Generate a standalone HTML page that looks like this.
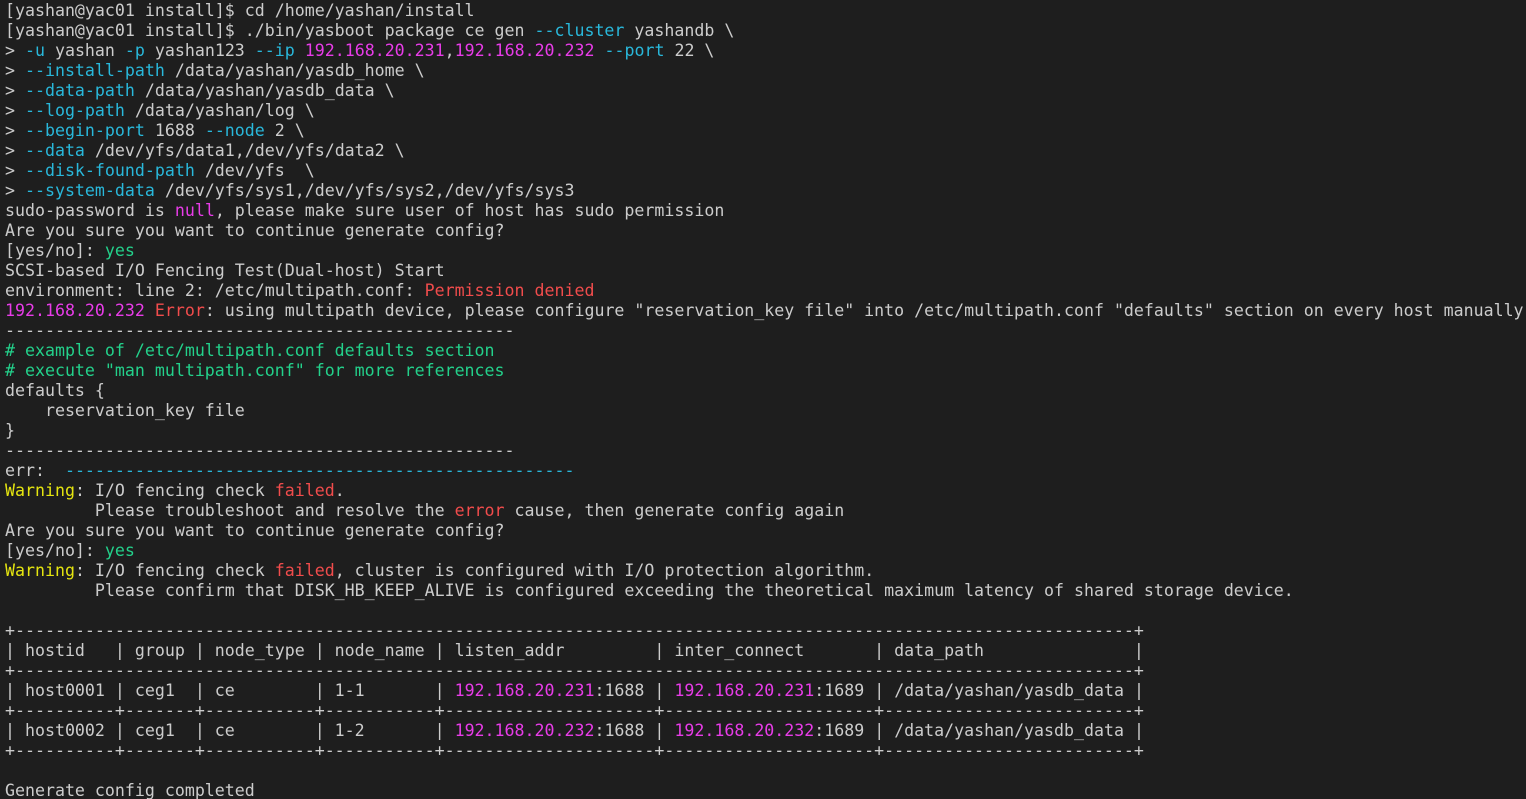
<!DOCTYPE html>
<html><head><meta charset="utf-8"><style>
html,body{margin:0;padding:0;background:#1e1e1e;width:1526px;height:799px;overflow:hidden}
pre{margin:0;padding:0 0 0 5px;font-family:"DejaVu Sans Mono","Liberation Mono",monospace;font-size:16.6px;line-height:20px;color:#cccccc;white-space:pre;position:relative;top:1px}
.c{color:#29b8db}.m{color:#e83ce8}.g{color:#23d18b}.y{color:#e5e510}.r{color:#f14c4c}
</style></head><body><pre>[yashan@yac01 install]$ cd /home/yashan/install
[yashan@yac01 install]$ ./bin/yasboot package ce gen <span class="c">--cluster</span> yashandb \
&gt; <span class="c">-u</span> yashan <span class="c">-p</span> yashan123 <span class="c">--ip</span> <span class="m">192.168.20.231</span>,<span class="m">192.168.20.232</span> <span class="c">--port</span> 22 \
&gt; <span class="c">--install-path</span> /data/yashan/yasdb_home \
&gt; <span class="c">--data-path</span> /data/yashan/yasdb_data \
&gt; <span class="c">--log-path</span> /data/yashan/log \
&gt; <span class="c">--begin-port</span> 1688 <span class="c">--node</span> 2 \
&gt; <span class="c">--data</span> /dev/yfs/data1,/dev/yfs/data2 \
&gt; <span class="c">--disk-found-path</span> /dev/yfs  \
&gt; <span class="c">--system-data</span> /dev/yfs/sys1,/dev/yfs/sys2,/dev/yfs/sys3
sudo-password is <span class="m">null</span>, please make sure user of host has sudo permission
Are you sure you want to continue generate config?
[yes/no]: <span class="g">yes</span>
SCSI-based I/O Fencing Test(Dual-host) Start
environment: line 2: /etc/multipath.conf: <span class="r">Permission denied</span>
<span class="m">192.168.20.232</span> <span class="r">Error</span>: using multipath device, please configure "reservation_key file" into /etc/multipath.conf "defaults" section on every host manually
---------------------------------------------------
<span class="g"># example of /etc/multipath.conf defaults section</span>
<span class="g"># execute "man multipath.conf" for more references</span>
defaults {
    reservation_key file
}
---------------------------------------------------
err:  <span class="c">---------------------------------------------------</span>
<span class="y">Warning</span>: I/O fencing check <span class="r">failed</span>.
         Please troubleshoot and resolve the <span class="r">error</span> cause, then generate config again
Are you sure you want to continue generate config?
[yes/no]: <span class="g">yes</span>
<span class="y">Warning</span>: I/O fencing check <span class="r">failed</span>, cluster is configured with I/O protection algorithm.
         Please confirm that DISK_HB_KEEP_ALIVE is configured exceeding the theoretical maximum latency of shared storage device.

+----------------------------------------------------------------------------------------------------------------+
| hostid   | group | node_type | node_name | listen_addr         | inter_connect       | data_path               |
+----------------------------------------------------------------------------------------------------------------+
| host0001 | ceg1  | ce        | 1-1       | <span class="m">192.168.20.231</span>:1688 | <span class="m">192.168.20.231</span>:1689 | /data/yashan/yasdb_data |
+----------+-------+-----------+-----------+---------------------+---------------------+-------------------------+
| host0002 | ceg1  | ce        | 1-2       | <span class="m">192.168.20.232</span>:1688 | <span class="m">192.168.20.232</span>:1689 | /data/yashan/yasdb_data |
+----------+-------+-----------+-----------+---------------------+---------------------+-------------------------+

Generate config completed</pre></body></html>
